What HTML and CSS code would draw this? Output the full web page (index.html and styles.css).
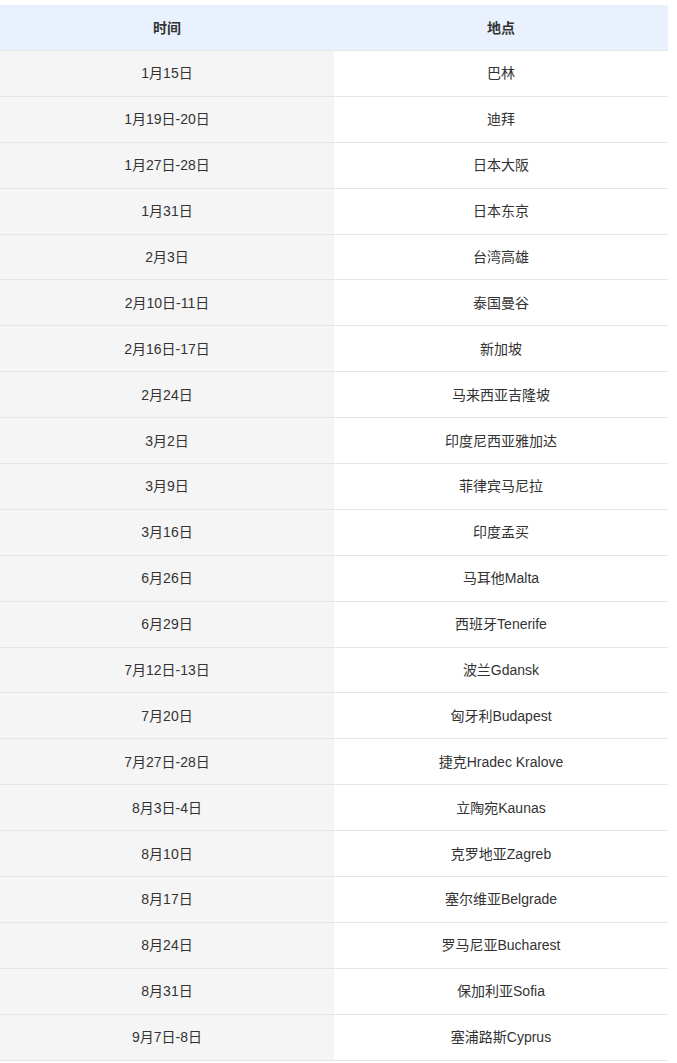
FILE: index.html
```html
<!DOCTYPE html>
<html lang="zh">
<head>
<meta charset="utf-8">
<link rel="stylesheet" href="styles.css">
</head>
<body>
<table class="sched">
<thead>
<tr><th>时间</th><th>地点</th></tr>
</thead>
<tbody>
<tr><td>1月15日</td><td>巴林</td></tr>
<tr><td>1月19日-20日</td><td>迪拜</td></tr>
<tr><td>1月27日-28日</td><td>日本大阪</td></tr>
<tr><td>1月31日</td><td>日本东京</td></tr>
<tr><td>2月3日</td><td>台湾高雄</td></tr>
<tr><td>2月10日-11日</td><td>泰国曼谷</td></tr>
<tr><td>2月16日-17日</td><td>新加坡</td></tr>
<tr><td>2月24日</td><td>马来西亚吉隆坡</td></tr>
<tr><td>3月2日</td><td>印度尼西亚雅加达</td></tr>
<tr><td>3月9日</td><td>菲律宾马尼拉</td></tr>
<tr><td>3月16日</td><td>印度孟买</td></tr>
<tr><td>6月26日</td><td>马耳他Malta</td></tr>
<tr><td>6月29日</td><td>西班牙Tenerife</td></tr>
<tr><td>7月12日-13日</td><td>波兰Gdansk</td></tr>
<tr><td>7月20日</td><td>匈牙利Budapest</td></tr>
<tr><td>7月27日-28日</td><td>捷克Hradec Kralove</td></tr>
<tr><td>8月3日-4日</td><td>立陶宛Kaunas</td></tr>
<tr><td>8月10日</td><td>克罗地亚Zagreb</td></tr>
<tr><td>8月17日</td><td>塞尔维亚Belgrade</td></tr>
<tr><td>8月24日</td><td>罗马尼亚Bucharest</td></tr>
<tr><td>8月31日</td><td>保加利亚Sofia</td></tr>
<tr><td>9月7日-8日</td><td>塞浦路斯Cyprus</td></tr>
</tbody>
</table>
</body>
</html>
```
FILE: styles.css
```css
html, body {
  margin: 0;
  padding: 0;
  background: #ffffff;
}
body {
  padding-top: 5px;
  font-family: "Liberation Sans", Arial, "Noto Sans CJK SC", sans-serif;
  font-size: 14px;
  color: #333333;
}
.sched {
  width: 668px;
  border-collapse: collapse;
  table-layout: fixed;
}
.sched th,
.sched td {
  width: 50%;
  height: 44.9px;
  padding: 0;
  text-align: center;
  vertical-align: middle;
  border-bottom: 1px solid #e6e6e6;
  line-height: 20px;
}
.sched th {
  height: 45px;
  background: #e8f1fd;
  font-weight: bold;
  color: #333333;
}
.sched td:first-child {
  background: #f5f5f5;
}
.sched td:last-child {
  background: #ffffff;
}
```
